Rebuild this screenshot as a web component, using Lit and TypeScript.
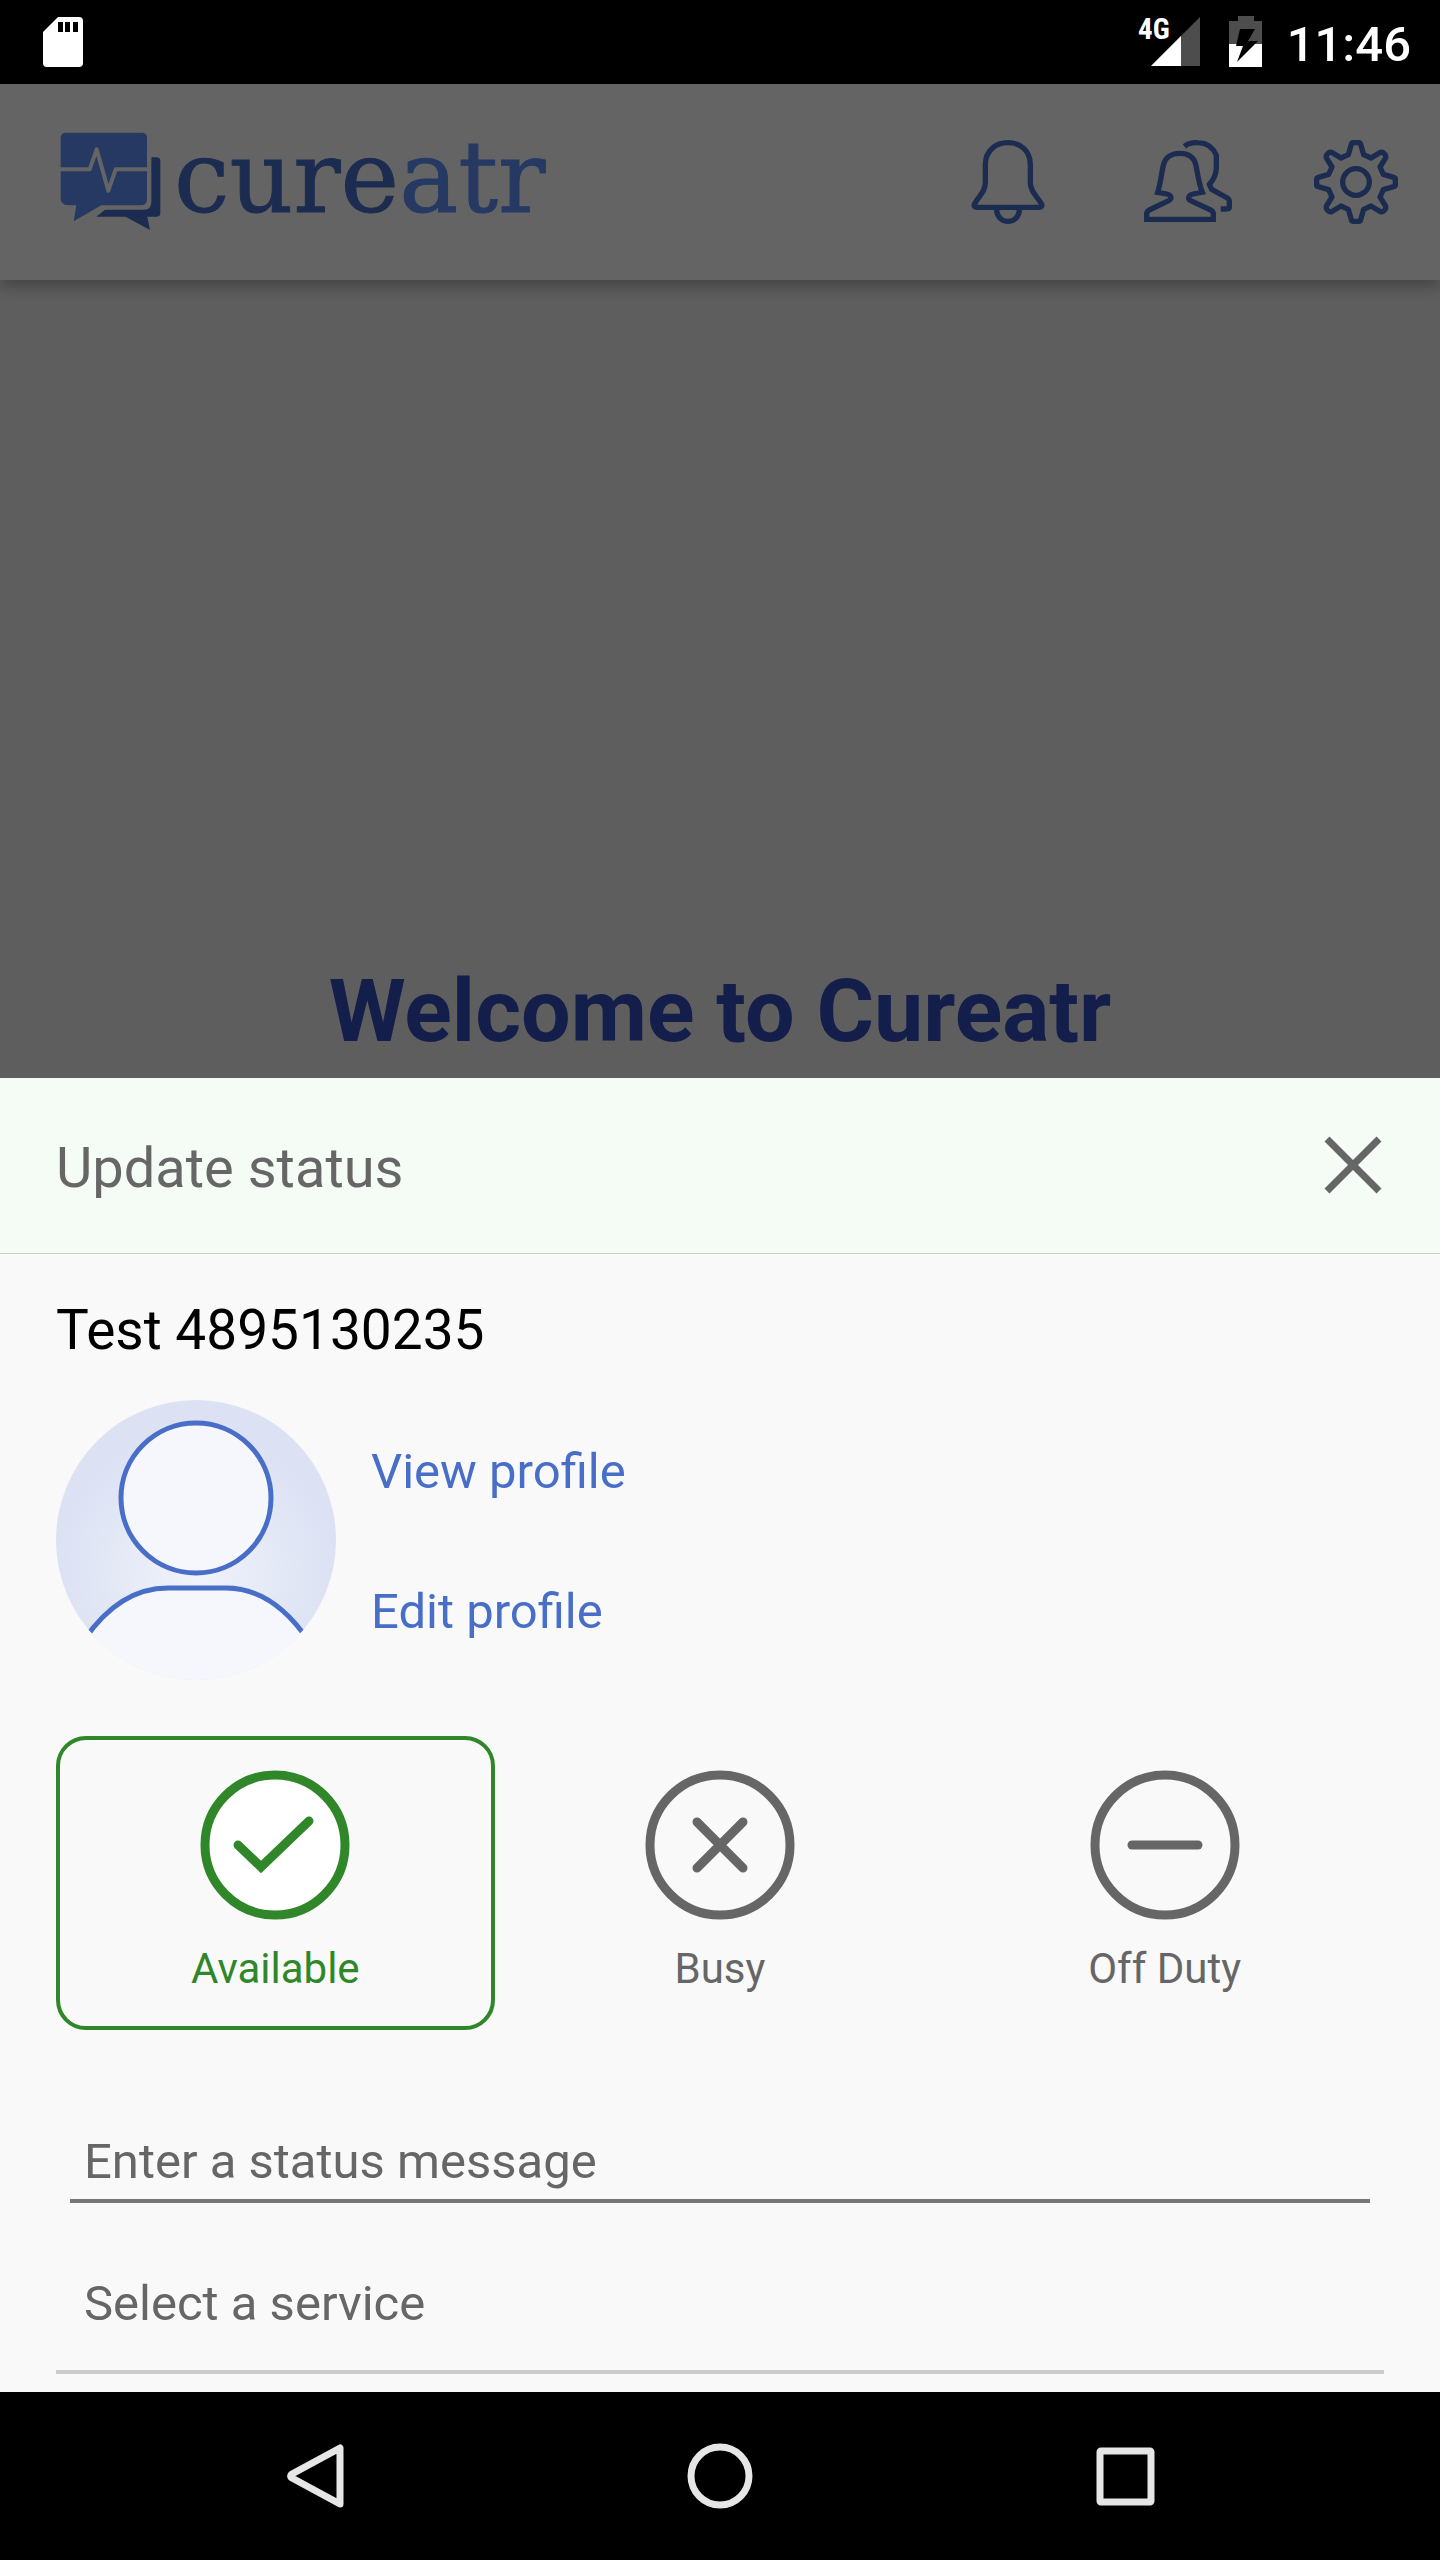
import { LitElement, html, css, svg } from "lit";
import { customElement, state } from "lit/decorators.js";

type Status = { id: string; label: string; mark: unknown };

const STATUSES: Status[] = [
  { id: "available", label: "Available", mark: svg`<path d="M38 75 L61 97 L109 51" />` },
  { id: "busy", label: "Busy", mark: svg`<path d="M52 52 L98 98 M98 52 L52 98" />` },
  { id: "off", label: "Off Duty", mark: svg`<path d="M42 75 H108" />` },
];

/* One quarter of the gear outline, centred on the origin. */
const GEAR_QUARTER =
  "M-8 -118 L8 -118 Q13 -118 14 -113 L23 -82 L45 -72 L71 -88 Q78 -92 85 -85 Q92 -78 88 -71 L72 -45 L82 -23 L113 -14 Q118 -13 118 -8";

@customElement("status-bar")
class StatusBar extends LitElement {
  static styles = css`
    :host {
      display: flex;
      align-items: center;
      height: 84px;
      padding: 0 29px 0 43px;
      box-sizing: border-box;
      background: #000;
      color: #fff;
    }
    .sd {
      width: 40px;
      height: 50px;
      margin-right: auto;
    }
    .tray {
      display: flex;
      align-items: center;
      gap: 24px;
    }
    .signal {
      width: 70px;
      height: 66px;
    }
    .network {
      font: 700 29px "Roboto Condensed", "Liberation Sans Narrow", Roboto, sans-serif;
      fill: #fff;
    }
    .battery {
      width: 34px;
      height: 52px;
    }
    .clock {
      font: 500 49px/58px Roboto, sans-serif;
      padding-top: 6px;
    }
  `;

  render() {
    return html`
      <svg class="sd" viewBox="0 0 40 50" aria-hidden="true">
        <path d="M15 0 H36 Q40 0 40 4 V46 Q40 50 36 50 H4 Q0 50 0 46 V15 Z" fill="#fff" />
        <path d="M15 5 H20 V15 H15 Z M22 5 H27 V15 H22 Z M30 5 H35 V15 H30 Z" fill="#000" />
      </svg>
      <div class="tray">
        <svg class="signal" viewBox="-4 -8 70 66" role="img" aria-label="Signal">
          <path d="M61 0 V49 H12 Z" fill="#4d4d4d" />
          <path d="M42 19 V49 H12 Z" fill="#fff" />
          <text class="network" x="-1" y="22">4G</text>
        </svg>
        <svg class="battery" viewBox="0 0 34 52" aria-hidden="true">
          <path d="M9 0 H25 V5 H33 V28 H0 V5 H9 Z" fill="#4d4d4d" />
          <path d="M0 28 H33 V51 H0 Z" fill="#fff" />
          <path d="M11 13 H26 L19 25 H29 L8 46 L14 30 H7 Z" fill="#000" />
        </svg>
        <time class="clock">11:46</time>
      </div>
    `;
  }
}

@customElement("app-header")
class AppHeader extends LitElement {
  static styles = css`
    :host {
      display: flex;
      align-items: center;
      justify-content: space-between;
      height: 196px;
      padding: 0 30px 0 60px;
      box-sizing: border-box;
      background: #fafafa;
      box-shadow: 0 6px 16px rgba(0, 0, 0, 0.3);
    }
    .logo {
      display: flex;
      align-items: center;
      gap: 12px;
      text-decoration: none;
    }
    .bubbles {
      width: 102px;
      height: 100px;
    }
    .word {
      font: 99px/108px "DejaVu Serif", serif;
      color: #486ec8;
      -webkit-text-stroke: 1px currentColor;
      padding-bottom: 8px;
    }
    .word-light {
      color: #5f8ff8;
    }
    .actions {
      display: flex;
      gap: 66px;
    }
    .action {
      width: 108px;
      height: 84px;
      padding: 0;
      border: 0;
      background: none;
    }
    .action svg {
      display: block;
      width: 108px;
      height: 84px;
      fill: none;
      stroke: #486ec8;
      stroke-width: 16;
      stroke-linejoin: round;
    }
  `;

  render() {
    return html`
      <a class="logo" href="#home" aria-label="cureatr">
        <svg class="bubbles" viewBox="60 64 306 300" aria-hidden="true">
          <path
            d="M334 140 H350 Q361 140 361 152 V308 Q361 318 350 318 H322 L330 358 L257 318 H169 L195 297 H312 Q334 297 334 274 Z"
            fill="#486ec8"
          />
          <path
            d="M78 66 H305 Q321 66 321 82 V266 Q321 284 303 284 H184 L101 332 L109 284 H84 Q62 284 62 262 V82 Q62 66 78 66 Z"
            fill="#5f8ff8"
          />
          <path
            d="M60 176 H149 L170 116 L205 240 L227 176 H323"
            fill="none"
            stroke="#fafafa"
            stroke-width="12"
            stroke-linejoin="round"
          />
        </svg>
        <span class="word">cure<span class="word-light">atr</span></span>
      </a>
      <nav class="actions">
        <button class="action" aria-label="Notifications">
          <svg viewBox="-17 30 324 252">
            <path
              d="M77 104 C77 62 108 38 145 38 C182 38 212 62 212 104 V158 C212 185 232 198 245 221 Q250 231 240 232 H50 Q40 231 45 221 C58 198 77 185 77 158 Z"
            />
            <path d="M111 234 A34 34 0 0 0 179 234" transform="translate(0 6)" />
          </svg>
        </button>
        <button class="action" aria-label="Contacts">
          <svg viewBox="504 30 324 252">
            <path
              d="M593 187 C602 160 604 130 611 102 C617 80 637 70 659 70 C682 70 701 80 707 102 C713 130 716 160 727 187 L700 192 C683 195 683 207 692 212 L752 240 Q760 244 760 252 V268 H560 V252 Q560 244 568 240 L626 212 C637 206 635 195 620 192 Z"
              stroke-linejoin="miter"
            />
            <path
              d="M673 49 C686 39 700 37 714 38 C745 39 762 58 769 76 V115 C768 135 760 150 748 163 L755 178 L802 204 Q808 208 808 214 V232 Q808 237 800 237 H782"
            />
          </svg>
        </button>
        <button class="action" aria-label="Settings">
          <svg viewBox="-162 -126 324 252" stroke-linecap="round">
            ${[0, 90, 180, 270].map((turn) => svg`<path d=${GEAR_QUARTER} transform="rotate(${turn})" />`)}
            <circle r="40" />
          </svg>
        </button>
      </nav>
    `;
  }
}

@customElement("status-sheet")
class StatusSheet extends LitElement {
  @state() private selected = "available";

  static styles = css`
    :host {
      display: block;
      background: #f9f9f9;
      color: #666;
      font-family: Roboto, sans-serif;
    }
    .head {
      display: flex;
      align-items: center;
      justify-content: space-between;
      height: 176px;
      padding: 0 56px;
      box-sizing: border-box;
      background: #f5fcf6;
      border-bottom: 1px solid #c8cec8;
    }
    .title {
      margin: 0;
      padding-top: 4px;
      font-size: 56px;
      line-height: 66px;
      font-weight: 400;
    }
    .close {
      width: 62px;
      height: 62px;
      padding: 0;
      border: 0;
      background: none;
    }
    .close svg {
      display: block;
      width: 62px;
      height: 62px;
    }
    .body {
      padding: 43px 56px 18px;
    }
    .name {
      margin: 0;
      font-size: 55px;
      line-height: 66px;
      font-weight: 400;
      color: #000;
    }
    .profile {
      display: flex;
      gap: 35px;
      margin-top: 37px;
    }
    .avatar {
      width: 280px;
      height: 280px;
    }
    .links {
      display: flex;
      flex-direction: column;
    }
    .link {
      flex: 1;
      display: flex;
      align-items: center;
      padding-top: 4px;
      font-size: 49px;
      line-height: 58px;
      color: #486ec8;
      text-decoration: none;
    }
    .options {
      display: grid;
      grid-template-columns: repeat(3, 1fr);
      gap: 6px;
      margin: 56px 0 0;
      padding: 0;
      border: 0;
    }
    .option {
      position: relative;
      display: flex;
      flex-direction: column;
      align-items: center;
      gap: 24px;
      padding: 30px 0 32px;
      border: 4px solid transparent;
      border-radius: 30px;
      font-size: 42px;
      line-height: 50px;
    }
    .option.on {
      border-color: #2f872a;
      color: #2f872a;
    }
    .radio {
      position: absolute;
      inset: 0;
      width: 100%;
      height: 100%;
      margin: 0;
      opacity: 0;
    }
    .mark {
      width: 150px;
      height: 150px;
      fill: none;
      stroke: currentColor;
      stroke-width: 9;
      stroke-linecap: round;
    }
    .on .disc {
      fill: #fff;
    }
    .field {
      display: block;
      box-sizing: border-box;
      font: 400 49px/58px Roboto, sans-serif;
      color: #666;
      background: none;
      border: 0 solid;
      border-radius: 0;
      outline: none;
    }
    .message {
      width: calc(100% - 28px);
      height: 78px;
      margin: 95px 14px 0;
      padding: 0 14px 2px;
      border-bottom: 4px solid #767676;
    }
    .message::placeholder {
      color: #666;
      opacity: 1;
    }
    .service {
      appearance: none;
      width: 100%;
      height: 136px;
      margin: 35px 0 0;
      padding: 0 28px;
      border-bottom: 4px solid #ccc;
    }
  `;

  render() {
    return html`
      <header class="head">
        <h2 class="title">Update status</h2>
        <button class="close" aria-label="Close">
          <svg viewBox="0 0 62 62" stroke="#666" stroke-width="7">
            <path d="M5 4 L57 56 M57 4 L5 56" />
          </svg>
        </button>
      </header>
      <div class="body">
        <h3 class="name">Test 4895130235</h3>
        <div class="profile">
          <svg class="avatar" viewBox="0 0 280 280" aria-hidden="true">
            <defs>
              <radialGradient id="glow" cx="140" cy="170" r="140" gradientUnits="userSpaceOnUse">
                <stop offset="0" stop-color="#f1f3fc" />
                <stop offset="0.8" stop-color="#dfe5f4" />
                <stop offset="1" stop-color="#dce2f4" />
              </radialGradient>
              <clipPath id="round"><circle cx="140" cy="140" r="140" /></clipPath>
            </defs>
            <g clip-path="url(#round)">
              <rect width="280" height="280" fill="url(#glow)" />
              <path d="M28 240 C54 202 84 188 112 188 H170 C198 188 226 202 252 240 L280 290 H0 Z" fill="#f5f7fd" />
              <g stroke="#486ec8" stroke-width="5">
                <circle cx="140" cy="98" r="75" fill="#f5f7fd" />
                <path d="M28 240 C54 202 84 188 112 188 H170 C198 188 226 202 252 240" fill="none" />
              </g>
            </g>
          </svg>
          <div class="links">
            <a class="link" href="#view">View profile</a>
            <a class="link" href="#edit">Edit profile</a>
          </div>
        </div>
        <fieldset class="options" aria-label="Status">
          ${STATUSES.map(
            (s) => html`
              <label class="option ${this.selected === s.id ? "on" : ""}">
                <input
                  class="radio"
                  type="radio"
                  name="status"
                  .checked=${this.selected === s.id}
                  @change=${() => (this.selected = s.id)}
                />
                <svg class="mark" viewBox="0 0 150 150" aria-hidden="true">
                  <circle class="disc" cx="75" cy="75" r="70" />
                  ${s.mark}
                </svg>
                <span>${s.label}</span>
              </label>
            `
          )}
        </fieldset>
        <input class="field message" type="text" placeholder="Enter a status message" aria-label="Status message" />
        <select class="field service" aria-label="Service">
          <option>Select a service</option>
        </select>
      </div>
    `;
  }
}

@customElement("nav-bar")
class NavBar extends LitElement {
  static styles = css`
    :host {
      display: grid;
      grid-template-columns: repeat(3, 1fr);
      height: 168px;
      padding: 0 8%;
      box-sizing: border-box;
      background: #000;
    }
    .key {
      display: flex;
      align-items: center;
      justify-content: center;
      padding: 0;
      border: 0;
      background: none;
    }
    .key svg {
      width: 66px;
      height: 66px;
      fill: none;
      stroke: #e6e6e6;
      stroke-width: 7;
      stroke-linejoin: round;
    }
  `;

  render() {
    return html`
      <button class="key" aria-label="Back">
        <svg viewBox="0 0 66 66"><path d="M56 5 V61 L8 35 Q5 33 8 31 Z" /></svg>
      </button>
      <button class="key" aria-label="Home">
        <svg viewBox="0 0 66 66"><circle cx="33" cy="33" r="29" /></svg>
      </button>
      <button class="key" aria-label="Recent apps">
        <svg viewBox="0 0 66 66"><rect x="10" y="8" width="51" height="51" rx="1" /></svg>
      </button>
    `;
  }
}

@customElement("app-root")
class AppRoot extends LitElement {
  static styles = css`
    :host {
      display: flex;
      flex-direction: column;
      min-height: 100vh;
    }
    .stage {
      flex: 1;
      display: grid;
    }
    .page,
    .scrim {
      grid-area: 1 / 1;
    }
    .page {
      background: #ebebeb;
    }
    .welcome {
      margin: 0;
      padding-top: 679px;
      text-align: center;
      font: 700 88px/104px Roboto, sans-serif;
      color: #324bbc;
    }
    .scrim {
      position: relative;
      display: flex;
      flex-direction: column;
      justify-content: flex-end;
      background: rgba(0, 0, 0, 0.6);
    }
  `;

  render() {
    return html`
      <status-bar></status-bar>
      <div class="stage">
        <main class="page">
          <app-header></app-header>
          <h1 class="welcome">Welcome to Cureatr</h1>
        </main>
        <div class="scrim">
          <status-sheet role="dialog" aria-label="Update status"></status-sheet>
        </div>
      </div>
      <nav-bar></nav-bar>
    `;
  }
}
